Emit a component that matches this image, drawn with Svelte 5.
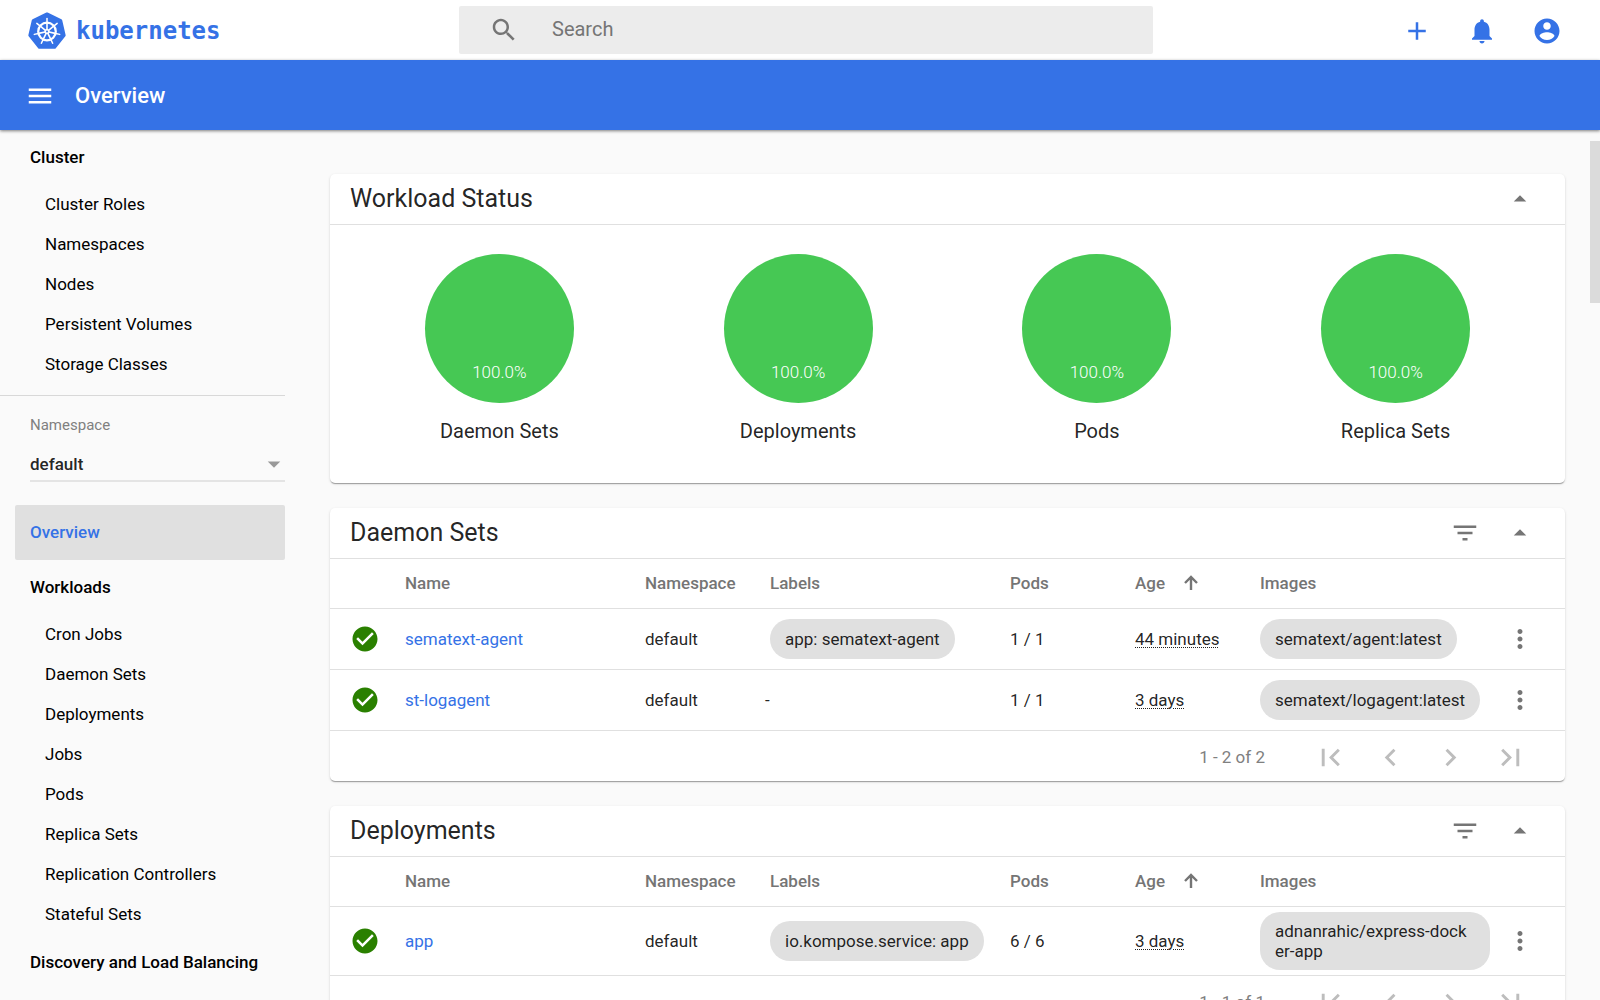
<script>
  const clusterItems = ['Cluster Roles', 'Namespaces', 'Nodes', 'Persistent Volumes', 'Storage Classes'];
  const workloadItems = [
    'Cron Jobs',
    'Daemon Sets',
    'Deployments',
    'Jobs',
    'Pods',
    'Replica Sets',
    'Replication Controllers',
    'Stateful Sets'
  ];
  const statuses = ['Daemon Sets', 'Deployments', 'Pods', 'Replica Sets'];

  const lists = [
    {
      title: 'Daemon Sets',
      range: '1 - 2 of 2',
      rows: [
        { name: 'sematext-agent', namespace: 'default', labels: ['app: sematext-agent'], pods: '1 / 1', age: '44 minutes', image: 'sematext/agent:latest' },
        { name: 'st-logagent', namespace: 'default', labels: [], pods: '1 / 1', age: '3 days', image: 'sematext/logagent:latest' }
      ]
    },
    {
      title: 'Deployments',
      range: '1 - 1 of 1',
      rows: [
        { name: 'app', namespace: 'default', labels: ['io.kompose.service: app'], pods: '6 / 6', age: '3 days', image: 'adnanrahic/express-docker-app' }
      ]
    }
  ];

  const pagerButtons = [
    { label: 'First page', path: 'M18.41 16.59L13.82 12l4.59-4.59L17 6l-6 6 6 6zM6 6h2v12H6z' },
    { label: 'Previous page', path: 'M15.41 7.41L14 6l-6 6 6 6 1.41-1.41L10.83 12z' },
    { label: 'Next page', path: 'M10 6L8.59 7.41 13.17 12l-4.58 4.59L10 18l6-6z' },
    { label: 'Last page', path: 'M5.59 7.41L10.18 12l-4.59 4.59L7 18l6-6-6-6zM16 6h2v12h-2z' }
  ];

  const spokes = [0, 1, 2, 3, 4, 5, 6].map((i) => (i * 360) / 7);
  const heptagon = spokes
    .map((a) => {
      const r = (a * Math.PI) / 180;
      return `${20 + 17.6 * Math.sin(r)},${20.5 - 17.6 * Math.cos(r)}`;
    })
    .join(' ');
</script>

{#snippet icon(path, size = '')}
  <svg class="icon {size}" viewBox="0 0 24 24" aria-hidden="true"><path d={path} /></svg>
{/snippet}

<div class="app">
  <header class="topbar">
    <a class="brand" href="#overview">
      <svg class="logo" viewBox="0 0 40 40" aria-hidden="true">
        <polygon points={heptagon} fill="#3572e6" stroke="#3572e6" stroke-width="3" stroke-linejoin="round" />
        <circle cx="20" cy="20.5" r="8.8" fill="none" stroke="#fff" stroke-width="2.2" />
        {#each spokes as angle}
          <g transform="rotate({angle} 20 20.5)" stroke="#fff" stroke-linecap="round">
            <path d="M20 18.5V12" stroke-width="1.6" />
            <path d="M20 11.5V7.5" stroke-width="1.5" />
          </g>
        {/each}
        <circle cx="20" cy="20.5" r="2.6" fill="#fff" />
        <circle cx="20" cy="20.5" r="1" fill="#3572e6" />
      </svg>
      <span>kubernetes</span>
    </a>
    <label class="search">
      {@render icon('M15.5 14h-.79l-.28-.27C15.41 12.59 16 11.11 16 9.5 16 5.91 13.09 3 9.5 3S3 5.91 3 9.5 5.91 16 9.5 16c1.61 0 3.09-.59 4.23-1.57l.27.28v.79l5 4.99L20.49 19l-4.99-5zm-6 0C7.01 14 5 11.99 5 9.5S7.01 5 9.5 5 14 7.01 14 9.5 11.99 14 9.5 14z')}
      <input type="text" placeholder="Search" aria-label="Search" />
    </label>
    <div class="actions">
      <button aria-label="Create">{@render icon('M19 13h-6v6h-2v-6H5v-2h6V5h2v6h6v2z')}</button>
      <button aria-label="Notifications">{@render icon('M12 22c1.1 0 2-.9 2-2h-4c0 1.1.89 2 2 2zm6-6v-5c0-3.07-1.64-5.64-4.5-6.32V4c0-.83-.67-1.5-1.5-1.5s-1.5.67-1.5 1.5v.68C7.63 5.36 6 7.92 6 11v5l-2 2v1h16v-1l-2-2z')}</button>
      <button aria-label="Account">{@render icon('M12 2C6.48 2 2 6.48 2 12s4.48 10 10 10 10-4.48 10-10S17.52 2 12 2zm0 3c1.66 0 3 1.34 3 3s-1.34 3-3 3-3-1.34-3-3 1.34-3 3-3zm0 14.2c-2.5 0-4.71-1.28-6-3.22.03-1.99 4-3.08 6-3.08 1.99 0 5.97 1.09 6 3.08-1.29 1.94-3.5 3.22-6 3.22z')}</button>
    </div>
  </header>

  <div class="toolbar">
    <button aria-label="Toggle menu">{@render icon('M3 18h18v-2H3v2zm0-5h18v-2H3v2zm0-7v2h18V6H3z')}</button>
    <h1>Overview</h1>
  </div>

  <div class="body">
    <nav class="sidebar">
      <a class="group" href="#cluster">Cluster</a>
      {#each clusterItems as item}
        <a class="item" href="#{item}">{item}</a>
      {/each}
      <div class="namespace">
        <label for="namespace">Namespace</label>
        <div class="select">
          <select id="namespace"><option>default</option></select>
          {@render icon('M7 10l5 5 5-5z')}
        </div>
      </div>
      <a class="group active" href="#overview">Overview</a>
      <a class="group" href="#workloads">Workloads</a>
      {#each workloadItems as item}
        <a class="item" href="#{item}">{item}</a>
      {/each}
      <a class="group" href="#discovery">Discovery and Load Balancing</a>
    </nav>

    <main>
      <section class="card">
        <div class="card-head">
          <h2>Workload Status</h2>
          <button aria-label="Collapse">{@render icon('M7 14l5-5 5 5z')}</button>
        </div>
        <div class="statuses">
          {#each statuses as status}
            <div class="status">
              <div class="pie">100.0%</div>
              <div class="caption">{status}</div>
            </div>
          {/each}
        </div>
      </section>

      {#each lists as list}
        <section class="card">
          <div class="card-head">
            <h2>{list.title}</h2>
            <button aria-label="Filter">{@render icon('M10 18h4v-2h-4v2zM3 6v2h18V6H3zm3 7h12v-2H6v2z')}</button>
            <button aria-label="Collapse">{@render icon('M7 14l5-5 5 5z')}</button>
          </div>
          <table>
            <thead>
              <tr>
                <th class="c-status"></th>
                <th>Name</th>
                <th class="c-short">Namespace</th>
                <th>Labels</th>
                <th class="c-short">Pods</th>
                <th class="c-short">
                  <span class="sorted">Age
                    <svg class="arrow" viewBox="0 0 14 16" aria-hidden="true"><path d="M7 15V2M1 8L7 2l6 6" /></svg>
                  </span>
                </th>
                <th>Images</th>
                <th class="c-menu"></th>
              </tr>
            </thead>
            <tbody>
              {#each list.rows as row}
                <tr>
                  <td class="ok">{@render icon('M12 2C6.48 2 2 6.48 2 12s4.48 10 10 10 10-4.48 10-10S17.52 2 12 2zm-2 15l-5-5 1.41-1.41L10 14.17l7.59-7.59L19 8l-9 9z')}</td>
                  <td><a href="#{row.name}">{row.name}</a></td>
                  <td>{row.namespace}</td>
                  <td class="chips">
                    {#each row.labels as label}<span class="chip">{label}</span>{:else}-{/each}
                  </td>
                  <td>{row.pods}</td>
                  <td><span class="age">{row.age}</span></td>
                  <td class="chips"><span class="chip">{row.image}</span></td>
                  <td class="menu">
                    <button aria-label="Actions">{@render icon('M12 8c1.1 0 2-.9 2-2s-.9-2-2-2-2 .9-2 2 .9 2 2 2zm0 2c-1.1 0-2 .9-2 2s.9 2 2 2 2-.9 2-2-.9-2-2-2zm0 6c-1.1 0-2 .9-2 2s.9 2 2 2 2-.9 2-2-.9-2-2-2z')}</button>
                  </td>
                </tr>
              {/each}
            </tbody>
          </table>
          <div class="pager">
            <span>{list.range}</span>
            {#each pagerButtons as button}
              <button aria-label={button.label} disabled>{@render icon(button.path, 'large')}</button>
            {/each}
          </div>
        </section>
      {/each}
    </main>
    <div class="thumb"></div>
  </div>
</div>

<style>
  :global(body) {
    margin: 0;
    background: #fafafa;
  }
  .app {
    display: flex;
    flex-direction: column;
    height: 100vh;
    overflow: hidden;
    font-family: Roboto, sans-serif;
    font-size: 17px;
    line-height: 20px;
    color: rgba(0, 0, 0, 0.87);
  }
  .app * {
    box-sizing: border-box;
  }
  button {
    display: flex;
    align-items: center;
    justify-content: center;
    padding: 0;
    border: 0;
    background: none;
    color: inherit;
  }
  a {
    text-decoration: none;
  }
  h1,
  h2 {
    margin: 0;
  }
  .icon {
    display: block;
    flex: none;
    width: 30px;
    height: 30px;
    fill: currentColor;
  }
  .icon.large {
    width: 35px;
    height: 35px;
  }

  .topbar {
    display: grid;
    grid-template-columns: 459px 1fr 447px;
    align-items: center;
    flex: none;
    height: 60px;
    background: #fff;
  }
  .brand {
    display: flex;
    align-items: center;
    gap: 9px;
    padding: 2px 0 0 27px;
    font-family: 'DejaVu Sans Mono', monospace;
    font-size: 24px;
    font-weight: 700;
    color: #3572e6;
  }
  .logo {
    width: 40px;
    height: 40px;
  }
  .search {
    display: flex;
    align-items: center;
    gap: 33px;
    height: 48px;
    padding: 0 30px;
    border-radius: 2px;
    background: #ececec;
    color: #757575;
  }
  .search input {
    flex: 1;
    min-width: 0;
    padding: 0 0 2px;
    border: 0;
    outline: 0;
    background: none;
    font: 20px/24px Roboto, sans-serif;
    color: rgba(0, 0, 0, 0.87);
  }
  .search input::placeholder {
    color: #757575;
    opacity: 1;
  }
  .actions {
    display: flex;
    justify-content: flex-end;
    gap: 15px;
    padding: 1px 28px 0 0;
    color: #3572e6;
  }
  .actions button {
    width: 50px;
    height: 50px;
  }

  .toolbar {
    display: flex;
    align-items: center;
    gap: 20px;
    flex: none;
    height: 70px;
    padding: 2px 25px 0;
    background: #3572e6;
    color: #fff;
    position: relative;
    z-index: 1;
    box-shadow: 0 1px 3px rgba(0, 0, 0, 0.5);
  }
  .toolbar h1 {
    font-size: 22px;
    font-weight: 500;
    line-height: 28px;
  }

  .body {
    display: flex;
    flex: 1;
    min-height: 0;
    position: relative;
  }
  .sidebar {
    flex: none;
    width: 300px;
    padding-right: 15px;
    overflow: hidden;
  }
  .group,
  .item {
    display: block;
    color: #000;
  }
  .group {
    margin-left: 15px;
    padding: 0 15px;
    border-radius: 2px;
    font-weight: 500;
    line-height: 55px;
    white-space: nowrap;
  }
  .group.active {
    background: #e0e0e0;
    color: #3572e6;
  }
  .item {
    padding: 0 0 1px 45px;
    line-height: 39px;
  }
  .namespace {
    margin-top: 10px;
    padding: 19px 0 23px 30px;
    border-top: 1px solid #d8d8d8;
  }
  .namespace label {
    display: block;
    font-size: 15px;
    color: #808080;
  }
  .select {
    display: flex;
    align-items: center;
    margin-top: 14px;
    padding-bottom: 1px;
    border-bottom: 2px solid #e4e4e4;
  }
  .select select {
    flex: 1;
    height: 30px;
    padding: 0;
    border: 0;
    background: none;
    appearance: none;
    font: 500 17px/20px Roboto, sans-serif;
    color: rgba(0, 0, 0, 0.87);
  }
  .select .icon {
    margin-right: -4px;
    color: #999;
  }

  main {
    flex: 1;
    min-width: 0;
    overflow: hidden;
    display: flex;
    flex-direction: column;
    gap: 25px;
    padding: 44px 35px 25px 30px;
  }
  .card {
    flex: none;
    border-radius: 5px;
    background: #fff;
    box-shadow:
      0 2px 1px -1px rgba(0, 0, 0, 0.2),
      0 1px 1px rgba(0, 0, 0, 0.14),
      0 1px 3px rgba(0, 0, 0, 0.12);
  }
  .card-head {
    display: flex;
    align-items: center;
    gap: 25px;
    height: 51px;
    padding: 0 30px 0 20px;
    border-bottom: 1px solid #e0e0e0;
    color: #757575;
  }
  .card-head h2 {
    flex: 1;
    font-size: 25px;
    font-weight: 400;
    line-height: 32px;
    color: rgba(0, 0, 0, 0.87);
  }
  .statuses {
    display: grid;
    grid-template-columns: repeat(4, 1fr);
    padding: 29px 20px 40px;
  }
  .status {
    display: flex;
    flex-direction: column;
    align-items: center;
    gap: 16px;
  }
  .pie {
    width: 149px;
    height: 149px;
    padding-top: 108px;
    border-radius: 50%;
    background: #46c854;
    font-weight: 300;
    text-align: center;
    color: #fff;
  }
  .caption {
    font-size: 20px;
    line-height: 24px;
  }

  table {
    width: 100%;
    table-layout: fixed;
    border-collapse: separate;
    border-spacing: 0;
  }
  th,
  td {
    padding: 0 0 0 5px;
    border-bottom: 1px solid #e0e0e0;
    text-align: left;
  }
  th {
    height: 50px;
    padding-bottom: 2px;
    font-weight: 500;
    color: #757575;
  }
  td {
    height: 61px;
  }
  td a {
    color: #3572e6;
  }
  .c-status {
    width: 70px;
  }
  .c-short {
    width: 125px;
  }
  .c-menu {
    width: 70px;
  }
  td.ok {
    padding-left: 20px;
    color: #2a8000;
  }
  td.chips {
    padding: 0;
  }
  .chip {
    display: inline-flex;
    align-items: center;
    vertical-align: middle;
    max-width: 230px;
    min-height: 40px;
    margin: 5px;
    padding: 9px 15px;
    border-radius: 20px;
    background: #e0e0e0;
    word-break: break-all;
  }
  .age {
    text-decoration: underline dotted 1px;
    text-underline-offset: 2px;
  }
  .sorted {
    display: flex;
    align-items: center;
    gap: 19px;
  }
  .arrow {
    width: 14px;
    height: 16px;
    fill: none;
    stroke: #757575;
    stroke-width: 2.4;
  }
  .menu {
    color: #757575;
  }
  .menu button {
    width: 40px;
    height: 40px;
  }
  .pager {
    display: flex;
    align-items: center;
    justify-content: flex-end;
    height: 50px;
    padding: 2px 25px 0 0;
    color: #808080;
  }
  .pager span {
    padding-right: 35px;
  }
  .pager button {
    width: 60px;
    height: 48px;
    color: #bdbdbd;
  }
  .thumb {
    position: absolute;
    top: 11px;
    right: 0;
    width: 10px;
    height: 162px;
    background: #dbdbdb;
  }
</style>
